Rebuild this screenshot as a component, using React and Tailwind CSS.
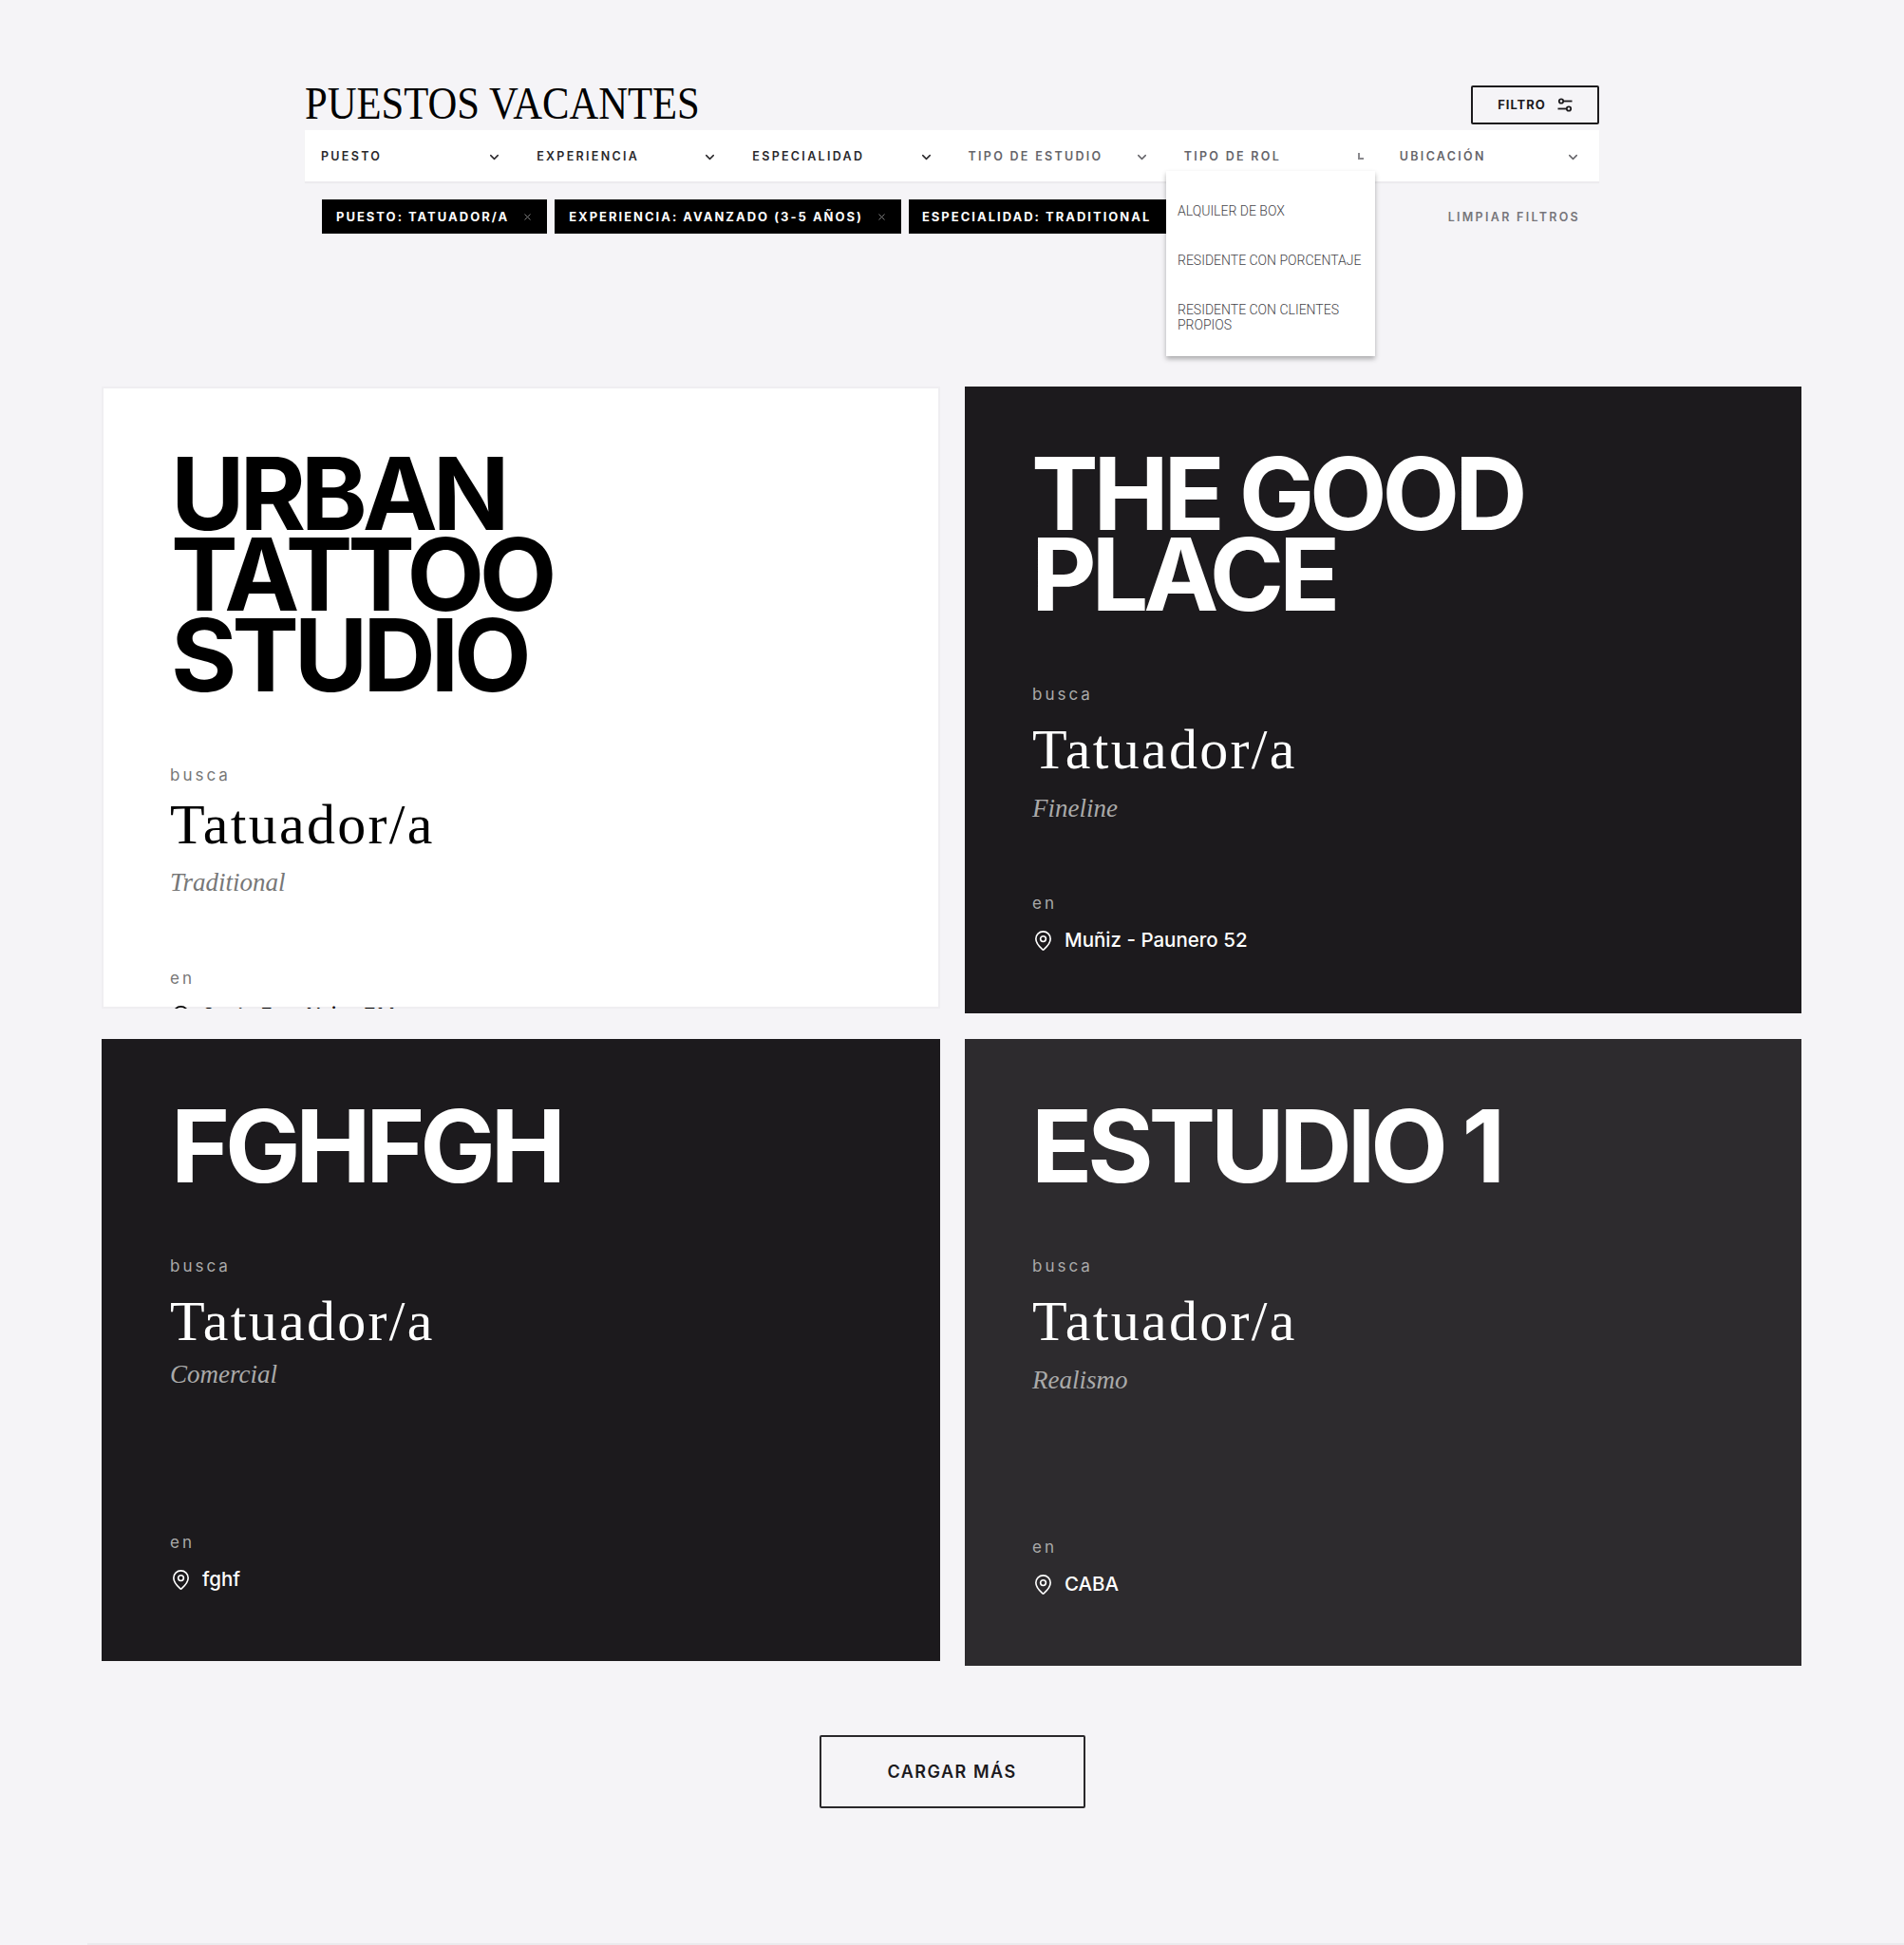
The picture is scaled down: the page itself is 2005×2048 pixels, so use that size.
import { ChevronDown, X, MapPin } from "lucide-react";

const sans = "font-['Inter',sans-serif]";
const serif = "font-['Liberation_Serif',serif]";

const filters = [
  { label: "PUESTO", dark: true },
  { label: "EXPERIENCIA", dark: true },
  { label: "ESPECIALIDAD", dark: true },
  { label: "TIPO DE ESTUDIO" },
  { label: "TIPO DE ROL", open: true },
  { label: "UBICACIÓN" },
];

const chips = ["PUESTO: TATUADOR/A", "EXPERIENCIA: AVANZADO (3-5 AÑOS)"];

function SlidersIcon() {
  return (
    <svg width="16" height="16" viewBox="0 0 16 16" fill="none" stroke="currentColor" strokeWidth="1.8">
      <circle cx="4" cy="3.5" r="2.2" />
      <path d="M6.5 3.5H15.5" />
      <circle cx="12" cy="11.5" r="2.2" />
      <path d="M0.5 11.5h9" />
    </svg>
  );
}

function Card({ name, specialty, place, theme, cardClass, titleClass, roleClass, specialtyClass, enClass }) {
  const light = theme === "light";
  return (
    <article className={`overflow-hidden px-[72px] pt-[70px] ${light ? "bg-white text-black shadow-[inset_0_0_0_2px_#efeef1]" : "text-white"} ${cardClass}`}>
      <h2 className={`${sans} text-[106px] leading-[85px] font-bold tracking-[-5.2px] whitespace-nowrap ${titleClass}`}>
        {name.map((line) => (
          <div key={line}>{line}</div>
        ))}
      </h2>
      <p className={`${sans} mt-[74px] text-[17px] leading-5 tracking-[3px] ${light ? "text-[#777]" : "text-[#aaa]"}`}>busca</p>
      <h3 className={`${serif} text-[60px] leading-[68px] tracking-[2.3px] ${roleClass}`}>Tatuador/a</h3>
      <p className={`${serif} text-[27px] leading-8 italic ${light ? "text-[#777]" : "text-[#aaa]"} ${specialtyClass}`}>{specialty}</p>
      <p className={`${sans} text-[17px] leading-5 tracking-[3px] ${light ? "text-[#777]" : "text-[#aaa]"} ${enClass}`}>en</p>
      <div className="mt-[15px] flex items-center gap-[11px]">
        <MapPin size={23} strokeWidth={1.7} />
        <span className={`${sans} text-[20.5px] leading-7 font-medium`}>{place}</span>
      </div>
    </article>
  );
}

export default function App() {
  return (
    <div className={`${sans} h-[2048px] overflow-hidden bg-[#f5f4f7]`}>
      <div className="ml-[321px] w-[1363px] pt-[90px]">
        <header className="flex h-[47px] items-start justify-between">
          <h1 className={`${serif} origin-left scale-x-[0.87] text-[49px] leading-[37px] whitespace-nowrap text-black`}>PUESTOS VACANTES</h1>
          <button className="flex h-[41px] w-[135px] items-center justify-center gap-3 rounded-[2px] border-2 border-[#1c1a1d] text-[13px] font-bold tracking-[1px] text-[#1c1a1d]">
            FILTRO
            <SlidersIcon />
          </button>
        </header>

        <div className="relative">
          <div className="grid h-[54px] grid-cols-6 bg-white shadow-[0_2px_1px_#ecebee]">
            {filters.map((f) => (
              <div key={f.label} className={`flex items-center justify-between pt-[3px] pr-[20px] pl-[17px] text-[12.5px] font-semibold tracking-[2.3px] ${f.dark ? "text-[#2a282b]" : "text-[#66656a]"}`}>
                {f.label}
                {f.open ? (
                  <span className="mr-[1px] mb-[2px] h-[7px] w-[6px] border-b-2 border-l-2 border-[#8a898d]" />
                ) : (
                  <ChevronDown size={15} strokeWidth={2.4} />
                )}
              </div>
            ))}
          </div>

          <div className="relative mt-[19px] flex h-[36px] items-center justify-between pr-[20px] pl-[18px]">
            <div className="flex gap-[8px]">
              {chips.map((c) => (
                <span key={c} className="flex h-[36px] items-center gap-[14px] bg-black px-[15px] pt-[1px] text-[13px] font-bold tracking-[2px] whitespace-nowrap text-white">
                  {c}
                  <X size={11} className="text-[#888]" />
                </span>
              ))}
              <span className="flex h-[36px] w-[271px] items-center bg-black pt-[1px] pl-[14px] text-[13px] font-bold tracking-[2px] whitespace-nowrap text-white">ESPECIALIDAD: TRADITIONAL</span>
            </div>
            <button className="pt-[2px] text-[12.5px] font-semibold tracking-[2.3px] text-[#77767b]">LIMPIAR FILTROS</button>
          </div>

          {/* Menu abierto de tipo de rol */}
          <div className="absolute top-[43px] left-[907px] w-[220px] bg-white pt-[34px] pr-[8px] pb-[25px] pl-[12px] font-['Roboto',sans-serif] text-[14px] leading-4 font-light text-[#444348] shadow-[0_3px_5px_rgba(0,0,0,0.3)]">
            <div className="flex flex-col gap-9">
              <div>ALQUILER DE BOX</div>
              <div>RESIDENTE CON PORCENTAJE</div>
              <div>RESIDENTE CON CLIENTES PROPIOS</div>
            </div>
          </div>
        </div>
      </div>

      <main className="mt-[161px] ml-[107px] grid w-[1790px] grid-cols-[883px_881px] items-start gap-x-[26px] gap-y-[27px]">
        <Card name={["URBAN", "TATTOO", "STUDIO"]} specialty="Traditional" place="Santa Fe - Alsina 714" theme="light" cardClass="h-[655px]" titleClass="ml-[1px]" roleClass="mt-[8px]" specialtyClass="mt-[11px]" enClass="mt-[75px]" />
        <Card name={["THE GOOD", "PLACE"]} specialty="Fineline" place="Muñiz - Paunero 52" theme="dark" cardClass="h-[660px] bg-[#1c1a1d] pl-[71px]" titleClass="-ml-[1px]" roleClass="mt-[14px]" specialtyClass="mt-[12px]" enClass="mt-[74px]" />
        <Card name={["FGHFGH"]} specialty="Comercial" place="fghf" theme="dark" cardClass="h-[655px] bg-[#1c1a1d]" titleClass="ml-[1px]" roleClass="mt-[14px]" specialtyClass="mt-[6px]" enClass="mt-[151px]" />
        <Card name={["ESTUDIO 1"]} specialty="Realismo" place="CABA" theme="dark" cardClass="h-[660px] bg-[#2d2b2e] pl-[71px]" titleClass="-ml-[1px]" roleClass="mt-[14px]" specialtyClass="mt-[12px]" enClass="mt-[150px]" />
      </main>

      <div className="mt-[73px] flex justify-center">
        <button className="h-[77px] w-[280px] rounded-[2px] border-2 border-[#2a282b] text-lg font-semibold tracking-[1.5px] text-[#1c1a1d]">CARGAR MÁS</button>
      </div>

      <div className="mt-[142px] ml-[92px] border-t-2 border-[#ebeaed]" />
    </div>
  );
}
